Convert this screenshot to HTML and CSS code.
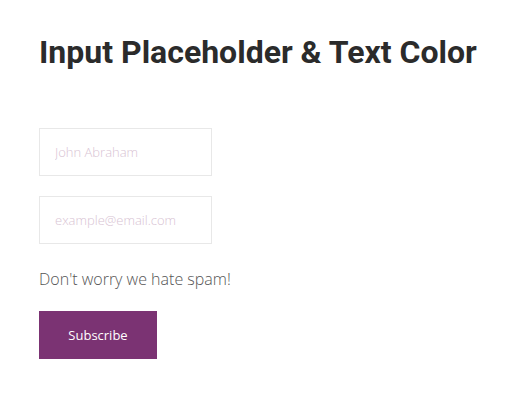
FILE: index.html
```html
<!DOCTYPE html>
<html>
<head>
<meta charset="utf-8">
<link rel="stylesheet" href="styles.css">
</head>
<body>
<div class="page">
  <h1 class="title">Input Placeholder &amp; Text Color</h1>
  <form class="form">
    <input class="field" type="text" placeholder="John Abraham">
    <input class="field" type="email" placeholder="example@email.com">
    <p class="note">Don't worry we hate spam!</p>
    <button class="btn" type="button">Subscribe</button>
  </form>
</div>
</body>
</html>
```
FILE: styles.css
```css
html, body {
  margin: 0;
  padding: 0;
  background: #fff;
}
.page {
  padding: 33px 39px 0;
}
.title {
  margin: 0;
  font-family: Roboto, "Liberation Sans", sans-serif;
  font-weight: 700;
  font-size: 32px;
  line-height: 38px;
  color: #2b2b2b;
}
.form {
  display: flex;
  flex-direction: column;
  align-items: flex-start;
  margin-top: 57px;
}
.field {
  box-sizing: border-box;
  width: 173px;
  height: 48px;
  border: 1px solid #e8e8e8;
  padding: 0 15px;
  margin: 0 0 20px;
  font-family: "Open Sans", sans-serif;
  font-weight: 300;
  font-size: 13px;
  color: #555;
  outline: none;
}
.field::placeholder {
  color: #d8c3d3;
  opacity: 1;
}
.note {
  margin: 3px 0 20px;
  font-family: "Open Sans", sans-serif;
  font-weight: 300;
  font-size: 16px;
  line-height: 24px;
  color: #555;
}
.btn {
  box-sizing: border-box;
  width: 118px;
  height: 48px;
  border: none;
  background: #7b3373;
  color: #fff;
  font-family: "Open Sans", sans-serif;
  font-size: 13px;
  padding: 0;
}
```
